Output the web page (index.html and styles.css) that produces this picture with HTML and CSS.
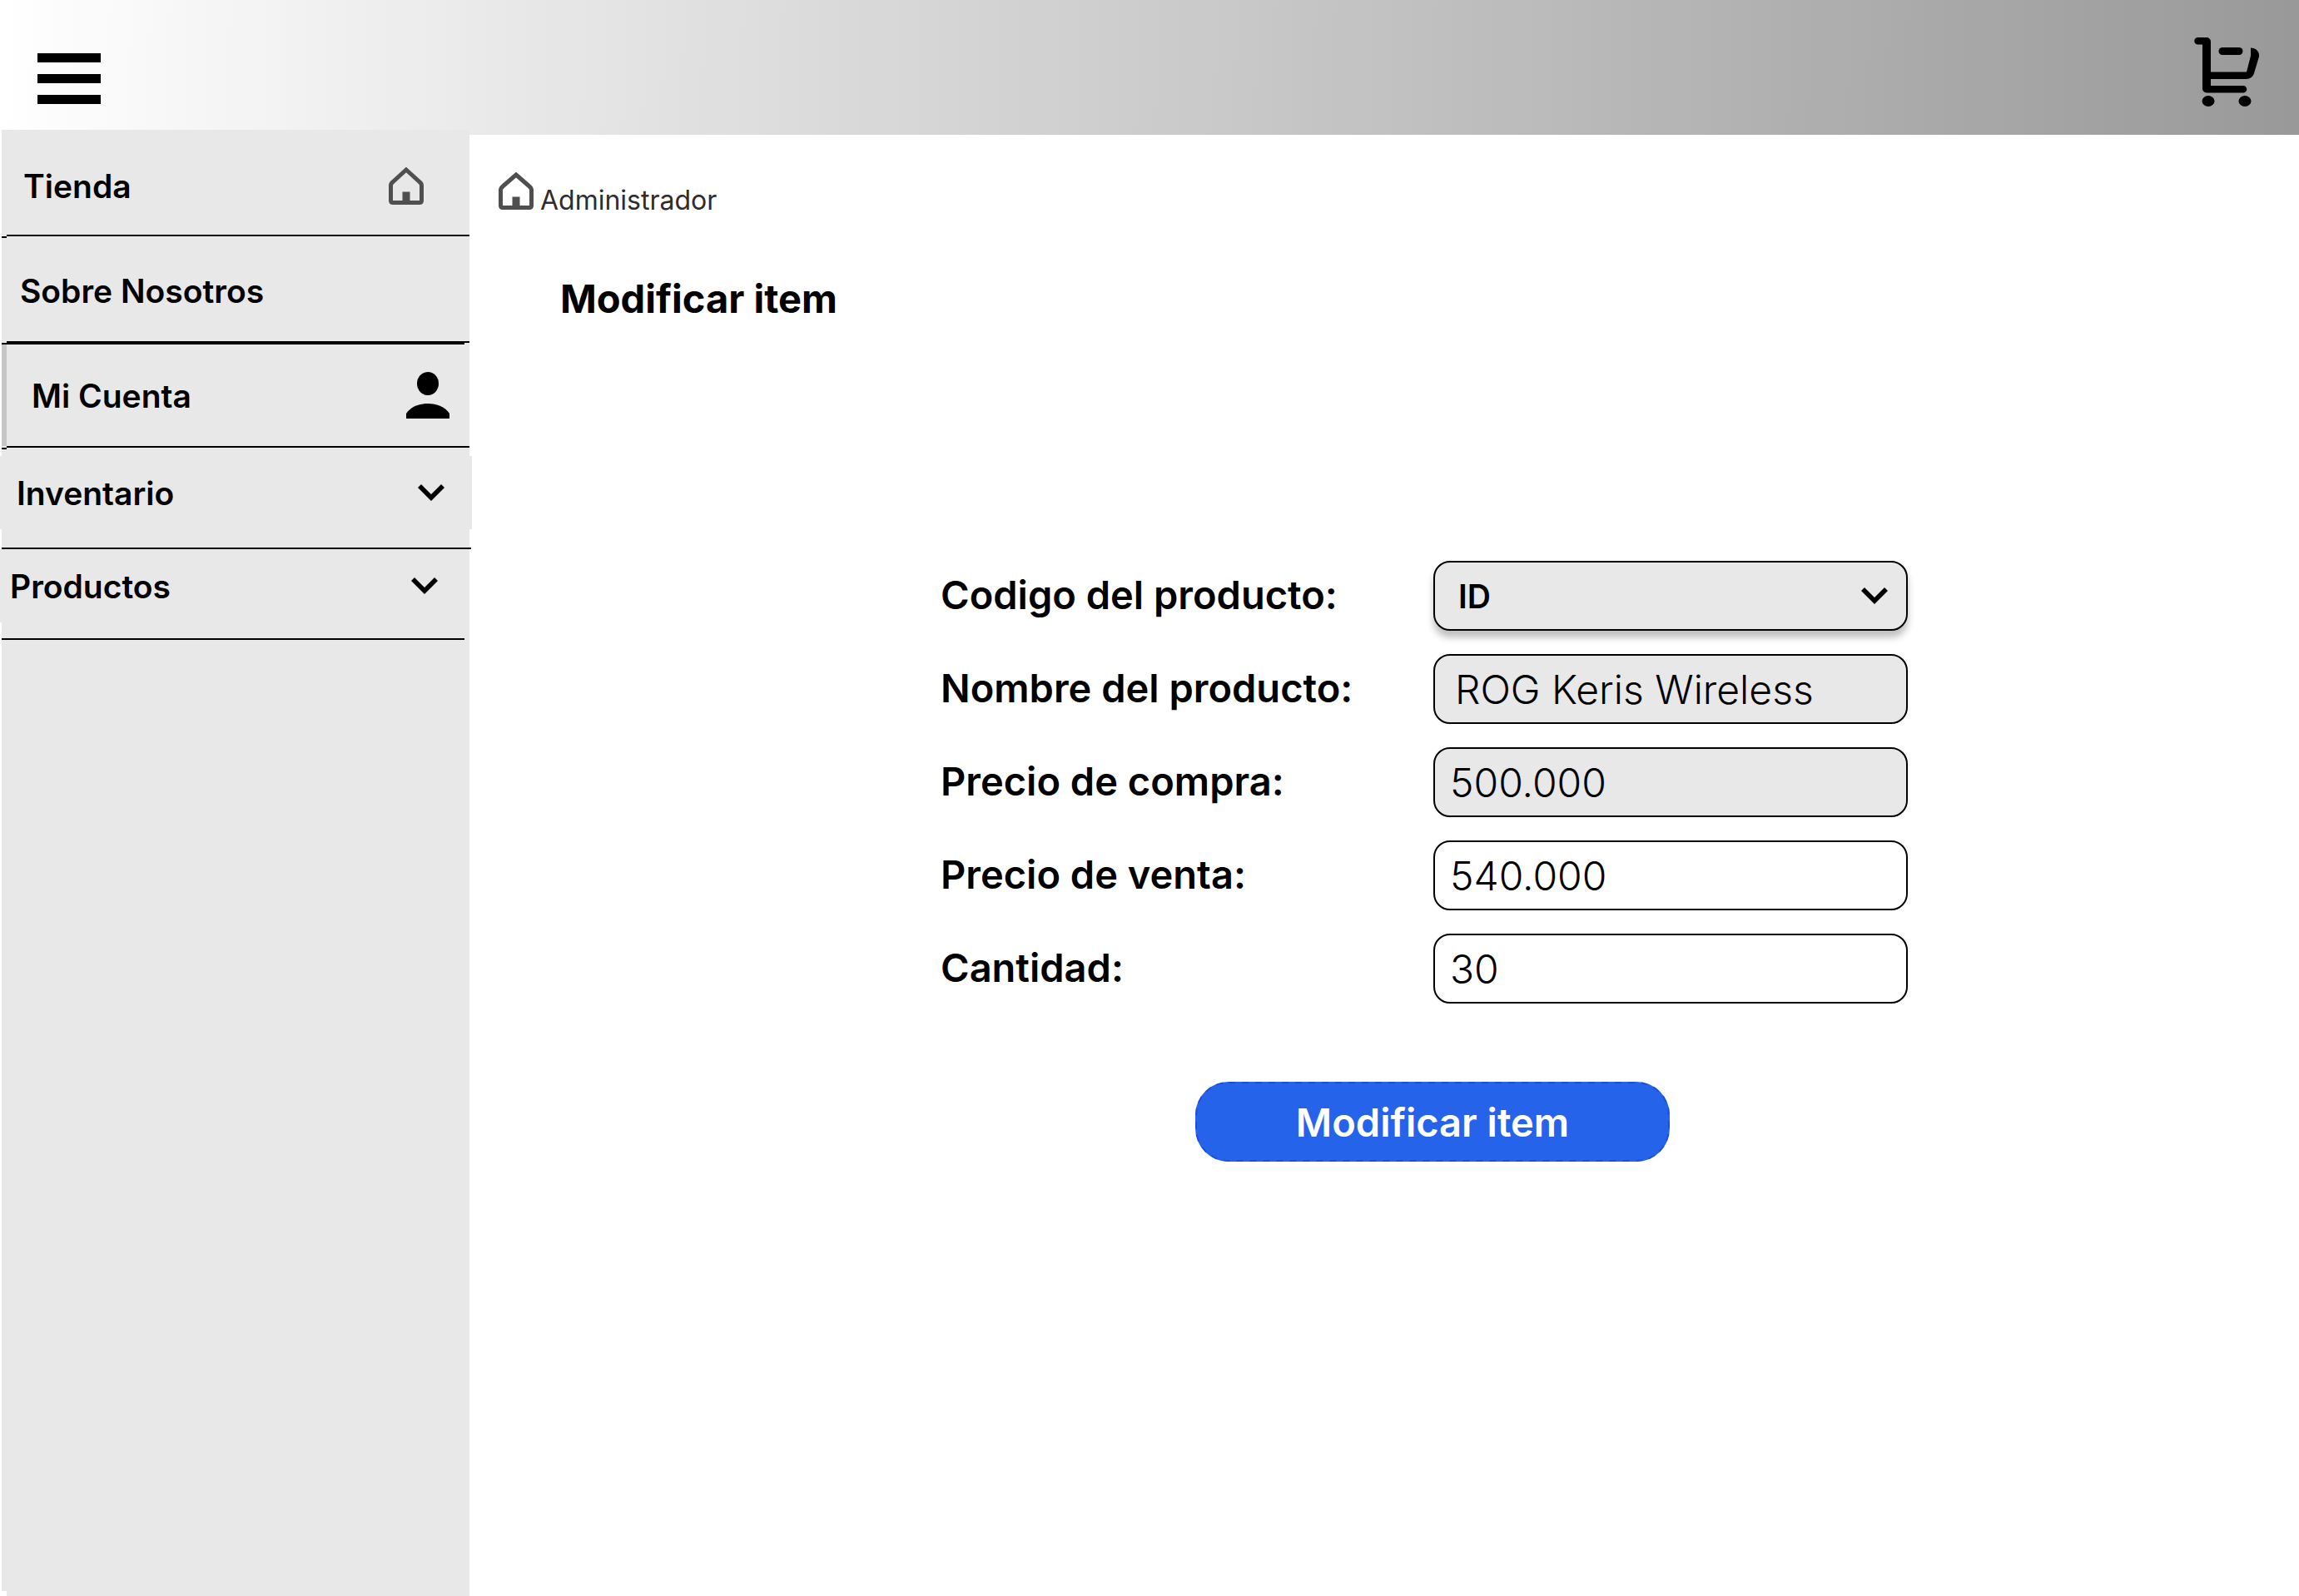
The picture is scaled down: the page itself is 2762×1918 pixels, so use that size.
FILE: index.html
```html
<!DOCTYPE html>
<html lang="es">
<head>
<meta charset="utf-8">
<meta name="viewport" content="width=device-width, initial-scale=1">
<title>Modificar item</title>
<link rel="stylesheet" href="styles.css">
</head>
<body>
<header class="topbar">
  <button class="icon-button" type="button" aria-label="Menú">
    <svg class="menu-icon" width="76" height="61" viewBox="0 0 76 61"><path d="M0 0h76v11H0zM0 25h76v11H0zM0 50h76v11H0z"/></svg>
  </button>
  <a class="cart-link" href="#carrito" aria-label="Carrito">
    <svg width="78" height="83" viewBox="0 0 78 83">
      <path d="M4.500 0H15a5 5 0 0 1 5 5V41.500H63L68 22V12.500C74 12.500 79 17 78 23L72 43C71 47 67 50 63 50H20V58H59a4 4 0 0 1 0 8.500H15a5 5 0 0 1-5-5V8.500H4.500a4.250 4.250 0 0 1 0-8.500Z"/>
      <rect x="29.500" y="12" width="29" height="9" rx="4.500"/>
      <ellipse cx="17" cy="76.500" rx="7.500" ry="6.500"/>
      <ellipse cx="61" cy="76.500" rx="7.500" ry="6.500"/>
    </svg>
  </a>
</header>
<div class="layout">
  <nav class="sidebar" aria-label="Principal">
    <ul class="menu">
      <li class="menu-row menu-row--store">
        <a class="menu-link" href="#tienda">Tienda
          <svg class="home-icon" width="42" height="45" viewBox="0 0 42 45"><path d="M21 3L37 17.500Q39.500 19.500 39.500 22V40Q39.500 42.500 37 42.500H5Q2.500 42.500 2.500 40V22Q2.500 19.500 5 17.500Z"/><rect x="16.500" y="29.500" width="9" height="13"/></svg>
        </a>
      </li>
      <li class="menu-row menu-row--about"><a class="menu-link" href="#nosotros">Sobre Nosotros</a></li>
      <li class="menu-row menu-row--account">
        <a class="menu-link" href="#cuenta">Mi Cuenta
          <svg width="52" height="56" viewBox="0 0 52 56"><ellipse cx="26" cy="14" rx="13" ry="14"/><path d="M0 56V50C5 42 15 38 26 38S47 42 52 50V56Z"/></svg>
        </a>
      </li>
      <li class="menu-group menu-group--inventory">
        <button class="menu-toggle" type="button" aria-expanded="false">Inventario
          <svg width="32" height="20" viewBox="0 0 32 20"><path d="M4 0L16 12L28 0L32 4L16 20L0 4Z"/></svg>
        </button>
      </li>
      <li class="menu-group menu-group--products">
        <button class="menu-toggle" type="button" aria-expanded="false">Productos
          <svg width="32" height="20" viewBox="0 0 32 20"><path d="M4 0L16 12L28 0L32 4L16 20L0 4Z"/></svg>
        </button>
      </li>
    </ul>
  </nav>
  <main class="content">
    <a class="breadcrumb" href="#administrador">
      <svg class="home-icon" width="42" height="45" viewBox="0 0 42 45"><path d="M21 3L37 17Q39.500 19 39.500 21.500V40Q39.500 42.500 37 42.500H5Q2.500 42.500 2.500 40V21.500Q2.500 19 5 17Z"/><rect x="16.500" y="29.500" width="9" height="13"/></svg>
      <span>Administrador</span>
    </a>
    <h1 class="title">Modificar item</h1>
    <form class="item-form">
      <div class="fields">
        <label class="field-label" for="codigo">Codigo del producto:</label>
        <div class="select-box">
          <select class="control control--select" id="codigo"><option>ID</option></select>
          <svg class="select-arrow" width="32" height="20" viewBox="0 0 32 20"><path d="M4 0L16 12L28 0L32 4L16 20L0 4Z"/></svg>
        </div>
        <label class="field-label" for="nombre">Nombre del producto:</label>
        <input class="control control--readonly control--name" id="nombre" type="text" value="ROG Keris Wireless" readonly>
        <label class="field-label" for="compra">Precio de compra:</label>
        <input class="control control--readonly" id="compra" type="text" value="500.000" readonly>
        <label class="field-label" for="venta">Precio de venta:</label>
        <input class="control" id="venta" type="text" value="540.000">
        <label class="field-label" for="cantidad">Cantidad:</label>
        <input class="control" id="cantidad" type="text" value="30">
      </div>
      <button class="submit" type="submit">
        <svg class="submit-outline" aria-hidden="true"><rect width="100%" height="100%" rx="40"/></svg>
        Modificar item
      </button>
    </form>
  </main>
</div>
</body>
</html>
```
FILE: styles.css
```css
* {
  box-sizing: border-box;
}

body {
  margin: 0;
  min-height: 100vh;
  display: flex;
  flex-direction: column;
  background: #fff;
  color: #000;
  font-family: "Inter", "Liberation Sans", sans-serif;
  font-size: 39px;
}

button,
input,
select {
  font: inherit;
  color: inherit;
}

a {
  color: inherit;
  text-decoration: none;
}

svg {
  display: block;
  flex: none;
}

.topbar {
  display: flex;
  justify-content: space-between;
  align-items: flex-start;
  height: 162px;
  padding: 45px 48px 0 45px;
  background: linear-gradient(91deg, #fff, #999);
}

.icon-button {
  padding: 19px 0 0;
  border: 0;
  background: none;
}

.layout {
  flex: 1;
  display: flex;
}

/* The panel overlaps the bar above it slightly */
.sidebar {
  flex: none;
  width: 562px;
  margin: -6px 0 0 2px;
  background:
    linear-gradient(#e8e8e8, #e8e8e8) 0 0 / 100% calc(100% - 6px) no-repeat,
    linear-gradient(#e8e8e8, #e8e8e8) 6px 0 / 100% 100% no-repeat;
}

.menu {
  margin: 0;
  padding: 0;
  list-style: none;
  font-weight: 600;
}

.menu-row {
  position: relative;
  margin-left: 6px;
  border-bottom: 2px solid #000;
}

/* Short stub that continues the divider over the left edge */
.menu-row::after {
  content: "";
  position: absolute;
  top: 100%;
  left: -6px;
  width: 6px;
  height: 2px;
  margin-top: 2px;
  background: #000;
}

.menu-link {
  display: flex;
  justify-content: space-between;
  align-items: center;
  height: 126px;
}

.menu-row--store .menu-link {
  padding: 8px 55px 0 20px;
}

.menu-row--about .menu-link {
  padding: 5px 16px 0 16px;
}

.menu-row--account::before {
  content: "";
  position: absolute;
  inset: 2px auto 0 -6px;
  width: 6px;
  background: #c6c6c6;
}

.menu-row--account .menu-link {
  height: 124px;
  padding: 2px 24px 0 30px;
  background: linear-gradient(#000, #000) 0 0 / calc(100% - 6px) 2px no-repeat;
}

.menu-group {
  border-bottom: 2px solid #000;
}

.menu-toggle {
  display: flex;
  justify-content: space-between;
  align-items: center;
  height: 88px;
  margin-left: -2px;
  border: 0;
  background: #e8e8e8;
}

.menu-group--inventory {
  margin-right: -2px;
  padding: 10px 0 22px;
}

.menu-group--inventory .menu-toggle {
  width: 567px;
  padding: 0 33px 0 20px;
}

.menu-group--products {
  margin-right: 6px;
  padding-bottom: 19px;
}

.menu-group--products .menu-toggle {
  width: 559px;
  padding: 0 33px 0 12px;
}

.home-icon path {
  fill: none;
  stroke: #4f4f4f;
  stroke-width: 5;
}

.home-icon rect {
  fill: #4f4f4f;
}

.content {
  flex: 1;
  padding: 45px 35px;
}

.breadcrumb {
  display: flex;
  align-items: baseline;
  gap: 8px;
  width: fit-content;
  height: 54px;
  color: #332b2d;
  font-size: 32px;
  line-height: 40px;
}

.title {
  margin: 68px 0 0 74px;
  font-size: 47px;
  line-height: 60px;
  font-weight: 700;
}

.item-form {
  display: flex;
  flex-direction: column;
  align-items: center;
  gap: 94px;
  max-width: 1258px;
  margin: 285px auto 0;
  padding-left: 96px;
  font-size: 47px;
}

.fields {
  display: grid;
  grid-template-columns: 1fr 570px;
  align-items: center;
  gap: 28px 0;
  width: 100%;
}

.field-label {
  padding-bottom: 4px;
  font-weight: 600;
}

.control {
  display: block;
  width: 100%;
  height: 84px;
  padding: 0 18px;
  border: 2px solid #000;
  border-radius: 20px;
  background: #fff;
  font-size: 48px;
  font-weight: 350;
}

.control--readonly {
  background: #e8e8e8;
}

.control--name {
  padding-left: 24px;
  font-weight: 300;
}

.select-box {
  position: relative;
}

.control--select {
  appearance: none;
  padding-left: 28px;
  background: #e8e8e8;
  box-shadow: 0 8px 8px rgba(0, 0, 0, 0.25);
  font-size: 39px;
  font-weight: 600;
}

.select-arrow {
  position: absolute;
  top: 32px;
  right: 24px;
  pointer-events: none;
}

.submit {
  position: relative;
  width: 570px;
  height: 96px;
  margin-left: 20px;
  border: 0;
  border-radius: 40px;
  background: #2563eb;
  color: #fff;
  font-weight: 600;
  overflow: hidden;
}

.submit-outline {
  position: absolute;
  inset: 0;
  width: 100%;
  height: 100%;
  fill: none;
  stroke: #1d4ed8;
  stroke-width: 4;
  stroke-dasharray: 8 8;
}
```
